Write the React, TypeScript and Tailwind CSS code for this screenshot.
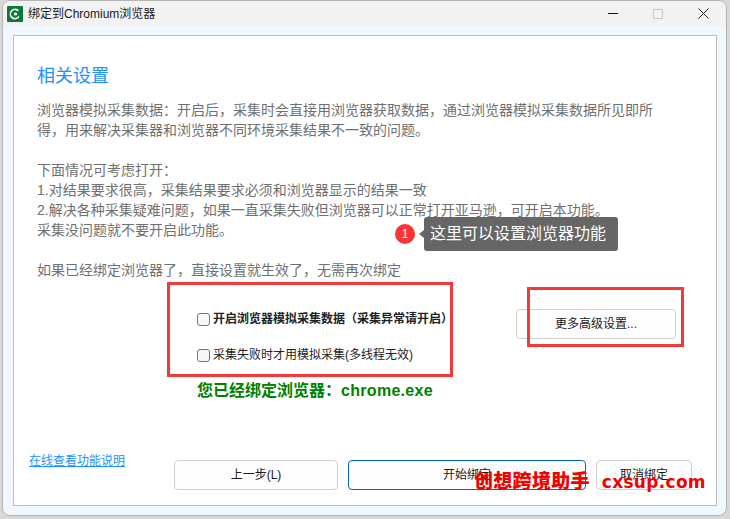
const F = "font-['Liberation_Sans','Noto_Sans_CJK_SC',sans-serif]";

function Btn({ children, w, blue }: { children: React.ReactNode; w: string; blue?: boolean }) {
  return (
    <div className={`${w} h-[30px] flex items-center justify-center rounded-[4px] bg-[#fdfdfd] border text-[12px] text-[#1a1a1a] ${blue ? 'border-[#0067c0]' : 'border-[#d0d0d0]'}`}>
      {children}
    </div>
  );
}

export default function App() {
  const lines = [
    '浏览器模拟采集数据\uFF1A开启后\uFF0C采集时会直接用浏览器获取数据\uFF0C通过浏览器模拟采集数据所见即所',
    '得\uFF0C用来解决采集器和浏览器不同环境采集结果不一致的问题。',
    '',
    '下面情况可考虑打开\uFF1A',
    '1.对结果要求很高\uFF0C采集结果要求必须和浏览器显示的结果一致',
    '2.解决各种采集疑难问题\uFF0C如果一直采集失败但浏览器可以正常打开亚马逊\uFF0C可开启本功能。',
    '采集没问题就不要开启此功能。',
    '',
    '如果已经绑定浏览器了\uFF0C直接设置就生效了\uFF0C无需再次绑定',
  ];
  return (
    <div className={`${F} relative w-[730px] h-[519px] overflow-hidden bg-[#d8d8d8]`}>
      <div className="absolute left-[2px] top-0 w-[725px] h-[516px] rounded-[8px] bg-[#f0f7fe] border border-[#b5b5b5] overflow-hidden flex flex-col">
        <div className="h-[25px] shrink-0 bg-[#f2f2f2] flex items-center pl-[4px]">
          <svg width="16" height="16" viewBox="0 0 16 16">
            <rect width="16" height="16" rx="1" fill="#0c7a3c" />
            <circle cx="8" cy="8" r="4.6" fill="none" stroke="#fff" strokeWidth="1.6" strokeDasharray="22 6" transform="rotate(35 8 8)" />
            <circle cx="8.5" cy="8" r="1.6" fill="#fff" />
          </svg>
          <span className="ml-[5px] text-[12px] text-[#1a1a1a]">绑定到Chromium浏览器</span>
          <div className="ml-auto flex items-center">
            <div className="w-[10px] h-px bg-[#111]" />
            <div className="ml-[35px] w-[10px] h-[10px] border border-[#c4c4c4] rounded-[1px]" />
            <svg className="ml-[35px] mr-[17px]" width="11" height="11" viewBox="0 0 11 11" stroke="#222" strokeWidth="1">
              <path d="M.5.5l10 10M10.5.5l-10 10" />
            </svg>
          </div>
        </div>
        <div className="mt-[9px] ml-[10px] mr-[9px] h-[471px] bg-white border border-[#bdbdbd] flex flex-col relative">
          <h1 className="mt-[25px] ml-[23px] text-[18px] leading-[30px] font-normal text-[#1e90ff]">相关设置</h1>
          <div className="mt-[9px] ml-[23px] text-[14px] leading-[20px] text-[#707070]">
            {lines.map((l, i) => (
              <div key={i} className="h-[20px] whitespace-nowrap">{l}</div>
            ))}
          </div>

          <div className="flex">
            <div className="ml-[183px] mt-[29px] text-[12px] text-[#222]">
              <label className="flex items-center h-[20px] font-bold">
                <span className="w-[13px] h-[13px] mr-[3px] rounded-[3px] border border-[#777] bg-[#f7f7f7]" />
                {'开启浏览器模拟采集数据\uFF08采集异常请开启\uFF09'}
              </label>
              <label className="mt-[16px] flex items-center h-[20px]">
                <span className="w-[13px] h-[13px] mr-[3px] rounded-[3px] border border-[#777] bg-[#f7f7f7]" />
                采集失败时才用模拟采集(多线程无效)
              </label>
            </div>
            <div className="ml-auto mr-[40px] mt-[29px]">
              <Btn w="w-[160px]">更多高级设置...</Btn>
            </div>
          </div>
          <div className="ml-[183px] mt-[15px] text-[16px] leading-[22px] font-bold text-[#008000] whitespace-nowrap">
            {'您已经绑定浏览器\uFF1A'}<span className="tracking-[0.3px]">chrome.exe</span>
          </div>

          <div className="mt-auto mb-[15px] flex items-end">
            <a className="ml-[15px] mb-[21px] text-[12px] leading-[16px] text-[#1e90ff] underline">在线查看功能说明</a>
            <div className="ml-[49px] flex gap-[10px]">
              <Btn w="w-[164px]">上一步(L)</Btn>
              <Btn w="w-[238px]" blue>开始绑定</Btn>
              <Btn w="w-[96px]">取消绑定</Btn>
            </div>
          </div>
        </div>
      </div>

      <div className="absolute left-[395px] top-[224px] w-[20px] h-[20px] rounded-full bg-[#fa3534] text-white text-[12px] leading-[20px] text-center">1</div>
      <div className="absolute left-[424px] top-[217px] w-[194px] h-[34px] rounded-[3px] bg-[#666] text-white text-[16px] leading-[34px] pl-[6px] whitespace-nowrap">这里可以设置浏览器功能</div>
      <div className="absolute left-[419px] top-[230px] w-0 h-0 border-y-[4px] border-y-transparent border-r-[5px] border-r-[#666]" />

      <div className="absolute left-[167px] top-[282px] w-[286px] h-[95px] border-[3px] border-[#f33a3a]" />
      <div className="absolute left-[527px] top-[287px] w-[157px] h-[60px] border-[3px] border-[#f33a3a]" />

      <div className="absolute left-[474px] top-[470px] text-[19px] leading-[24px] font-black tracking-[0.3px] text-[#f30000] whitespace-nowrap">
        创想跨境助手<span className="ml-[12px] tracking-[0.3px] font-['DejaVu_Sans',sans-serif] font-bold text-[17px]">cxsup.com</span>
      </div>
    </div>
  );
}
